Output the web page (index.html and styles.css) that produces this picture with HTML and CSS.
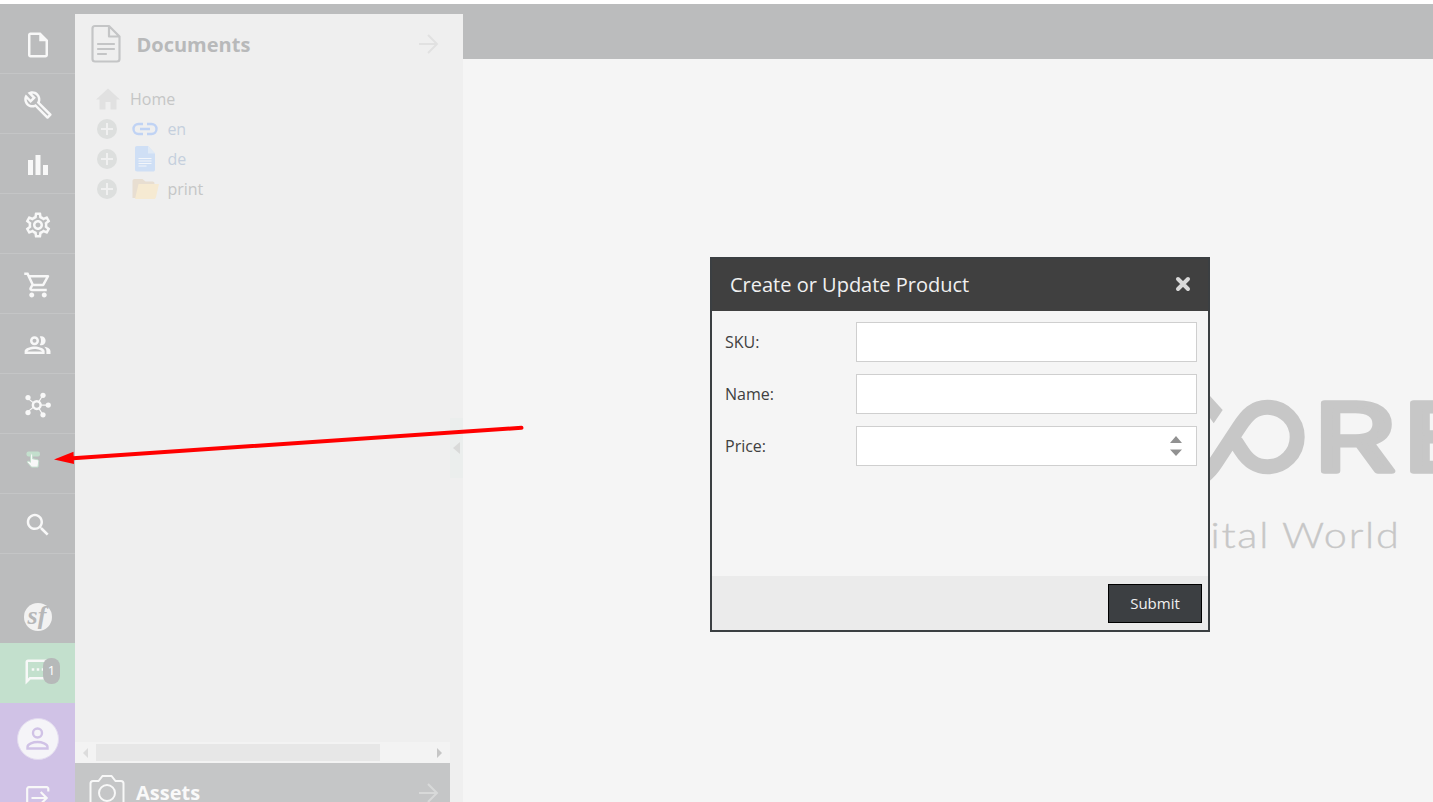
FILE: index.html
```html
<!DOCTYPE html>
<html lang="en">
<head>
<meta charset="utf-8">
<title>Create or Update Product</title>
<link rel="stylesheet" href="styles.css">
</head>
<body>
<div class="app">
  <nav class="sidebar">
    <div class="nav-item"><svg class="icon" viewBox="0 0 24 24"><path d="M14 2H6c-1.100 0-2 .9-2 2v16c0 1.100.9 2 2 2h12c1.100 0 2-.9 2-2V8l-6-6zM6 20V4h7v5h5v11H6z"/></svg></div>
    <div class="nav-item"><svg class="icon" viewBox="0 0 24 24"><path d="M22.610 18.990l-9.080-9.080c.93-2.340.45-5.100-1.440-7C9.790.61 6.210.4 3.660 2.260L7.500 6.110 6.080 7.520 2.250 3.690C.39 6.230.6 9.820 2.900 12.110c1.860 1.860 4.570 2.350 6.890 1.480l9.110 9.110c.39.39 1.020.39 1.410 0l2.300-2.300c.4-.38.4-1.010 0-1.410zm-3 1.600l-9.460-9.460c-.61.45-1.290.72-2 .82-1.360.2-2.790-.21-3.830-1.250C3.370 9.760 2.930 8.500 3 7.260l3.090 3.090 4.240-4.240-3.090-3.090c1.240-.07 2.490.37 3.440 1.310 1.080 1.080 1.490 2.570 1.240 3.960-.12.71-.42 1.370-.88 1.960l9.450 9.450-.88.89z"/></svg></div>
    <div class="nav-item"><svg class="icon" viewBox="0 0 24 24"><path d="M4 8h4v12H4zM10 4h4v16h-4zM16 12h4v8h-4z"/></svg></div>
    <div class="nav-item"><svg class="icon" viewBox="0 0 24 24"><path d="M19.430 12.980c.04-.32.07-.64.07-.98s-.03-.66-.07-.98l2.110-1.650c.19-.15.24-.42.12-.64l-2-3.460c-.12-.22-.39-.3-.61-.22l-2.490 1c-.52-.4-1.080-.73-1.690-.98l-.38-2.650C14.460 2.180 14.250 2 14 2h-4c-.25 0-.46.18-.49.42l-.38 2.650c-.61.25-1.170.59-1.690.98l-2.490-1c-.23-.09-.49 0-.61.22l-2 3.460c-.13.22-.07.49.12.64l2.110 1.650c-.04.32-.07.65-.07.98s.03.66.07.98l-2.110 1.650c-.19.15-.24.42-.12.64l2 3.460c.12.22.39.3.61.22l2.490-1c.52.4 1.080.73 1.690.98l.38 2.650c.03.24.24.42.49.42h4c.25 0 .46-.18.49-.42l.38-2.650c.61-.25 1.170-.59 1.690-.98l2.490 1c.23.09.49 0 .61-.22l2-3.460c.12-.22.07-.49-.12-.64l-2.110-1.650zm-1.980-1.710c.04.31.05.52.05.73s-.02.43-.05.73l-.14 1.130.89.7 1.080.84-.7 1.210-1.270-.51-1.040-.42-.9.68c-.43.32-.84.56-1.250.73l-1.060.43-.16 1.130-.2 1.350h-1.400l-.35-2.480-1.060-.43c-.43-.18-.83-.41-1.230-.71l-.91-.7-1.060.43-1.270.51-.7-1.210 1.080-.84.89-.7-.14-1.130c-.03-.31-.05-.54-.05-.74s.02-.43.05-.73l.14-1.130-.89-.7-1.080-.84.7-1.210 1.270.51 1.040.42.9-.68c.43-.32.84-.56 1.250-.73l1.060-.43.35-2.480h1.390l.35 2.480 1.060.43c.43.18.83.41 1.230.71l.91.7 1.060-.43 1.270-.51.7 1.210-1.070.85-.89.7.14 1.130zM12 8c-2.210 0-4 1.790-4 4s1.790 4 4 4 4-1.790 4-4-1.790-4-4-4zm0 6c-1.100 0-2-.9-2-2s.9-2 2-2 2 .9 2 2-.9 2-2 2z"/></svg></div>
    <div class="nav-item"><svg class="icon" viewBox="0 0 24 24"><path d="M15.550 13c.75 0 1.410-.41 1.750-1.030l3.580-6.490c.37-.66-.11-1.480-.87-1.480H5.210l-.94-2H1v2h2l3.600 7.590-1.350 2.440C4.520 15.370 5.480 17 7 17h12v-2H7l1.100-2h7.450zM6.160 6h12.150l-2.760 5H8.530L6.160 6zM7 18c-1.100 0-1.990.9-1.990 2S5.900 22 7 22s2-.9 2-2-.9-2-2-2zm10 0c-1.100 0-1.990.9-1.990 2s.89 2 1.990 2 2-.9 2-2-.9-2-2-2z"/></svg></div>
    <div class="nav-item"><svg class="icon" viewBox="0 0 24 24"><circle class="line" cx="9.200" cy="8.600" r="2.600"/><path d="M13.400 5.200c2.500-.8 4.700.8 4.700 3.400s-2.200 4.200-4.700 3.400c1.400-2.100 1.400-4.700 0-6.800zM9.300 13.200c-2.800 0-8 1.200-8 3.800v2.200h16V17c0-2.600-5.300-3.800-8-3.800zm5.900 3.900H3.500c.7-.9 3.400-1.900 5.800-1.900s5.200 1 5.900 1.900zM17 13.400c2.700.4 5 1.700 5 3.600v2.200h-3.300V17c0-1.600-.7-2.700-1.700-3.600z"/></svg></div>
    <div class="nav-item"><svg class="icon" viewBox="0 0 24 24"><circle class="line" cx="11" cy="12" r="3.100"/><path class="thin" d="M12.800 9.200l3-5M12.800 14.800l3 5M14.500 12h6M8.400 10.300l-5-4M8.400 13.700l-5 4"/><circle cx="16" cy="4.200" r="2.100"/><circle cx="16" cy="19.800" r="2.100"/><circle cx="20.200" cy="12" r="2.100"/><circle cx="4" cy="6" r="2.100"/><circle cx="4" cy="18" r="2.100"/></svg></div>
    <div class="nav-item nav-custom"><svg class="hand" viewBox="0 0 15 18"><rect class="mint" x="0.500" y="0.500" width="13.500" height="5" rx="2"/><path class="finger" d="M4.500 3c1.600-.5 2 .3 2 1.300v3.500l5 .9c1 .2 1.300 1 1.200 1.900l-.7 5.500H5.500L1 11c.6-1.200 2-1 3.500.3z"/></svg></div>
    <div class="nav-item"><svg class="icon" viewBox="0 0 24 24"><path d="M15.500 14h-.79l-.28-.27C15.410 12.590 16 11.110 16 9.500 16 5.910 13.090 3 9.500 3S3 5.910 3 9.500 5.910 16 9.500 16c1.610 0 3.090-.59 4.230-1.570l.27.28v.79l5 4.990L20.490 19l-4.990-5zm-6 0C7.010 14 5 11.990 5 9.500S7.010 5 9.500 5 14 7.010 14 9.500 11.990 14 9.500 14z"/></svg></div>
    <div class="symfony"><span>sf</span></div>
    <div class="messages"><svg class="icon" viewBox="0 0 24 24"><path d="M20 2H4c-1.100 0-2 .9-2 2v18l4-4h14c1.100 0 2-.9 2-2V4c0-1.100-.9-2-2-2zm0 14H5.200L4 17.200V4h16v12zM7 9h2v2H7zm4 0h2v2h-2zm4 0h2v2h-2z"/></svg><span class="badge">1</span></div>
    <div class="account">
      <div class="avatar"><svg viewBox="0 0 40 40"><circle cx="19.500" cy="14" r="4.500"/><path d="M9.500 29.500V28c0-3.200 5.800-5 10-5s10 1.800 10 5v1.500z"/></svg></div>
      <svg class="logout" viewBox="0 0 24 24"><path d="M21.500 6V3.500c0-.8-.6-1.500-1.500-1.500H3.500C2.700 2 2 2.700 2 3.500V22M6 12h14M14.500 6.500L20 12l-5.500 5.500"/></svg>
    </div>
  </nav>

  <aside class="panel">
    <div class="panel-body">
      <header class="panel-head">
        <svg class="doc-icon" viewBox="0 0 32 40"><path d="M5 2h14l10.500 10.500V35c0 1.700-.8 2.500-2.500 2.500H5c-1.700 0-2.500-.8-2.500-2.500V4.500C2.500 2.800 3.300 2 5 2zM19 2v10.500h10.500M8 20h16M8 25h16M8 30h8"/></svg>
        <h2>Documents</h2>
        <svg class="arrow" viewBox="0 0 22 22"><path d="M1 11h18M10 2l9 9-9 9"/></svg>
      </header>
      <ul class="tree">
        <li class="root"><svg class="home" viewBox="0 0 24 22"><path d="M12 .5L24 11.500h-3.500V21.500h-6v-7.500h-5v7.500h-6V11.500H0z"/></svg><span>Home</span></li>
        <li><i class="plus"></i><svg class="node" viewBox="0 0 28 28"><path class="chain" d="M12 9H7.500a5 5 0 0 0 0 10H12M16 9h4.500a5 5 0 0 1 0 10H16M9 14h10"/></svg><span class="linked">en</span></li>
        <li><i class="plus"></i><svg class="node" viewBox="0 0 28 28"><path fill="#cfdff5" d="M5.500 1H17l7 7.500v16c0 1.500-.7 2-2 2H6c-1.300 0-2-.7-2-2V3c0-1.300.7-2 2-2z"/><path fill="#e0eaf6" d="M17 1l7 7.500h-7z"/><path class="rules" d="M7.500 13.500h13M7.500 16h13M7.500 18.500h13M7.500 21h8"/></svg><span class="linked">de</span></li>
        <li><i class="plus"></i><svg class="node" viewBox="0 0 28 28"><path fill="#e8ded1" d="M1.500 6c0-1 .7-2 2-2h8l3 2.500h7c1.300 0 2 .7 2 2V23h-22z"/><path fill="#f6ead2" d="M7.500 9H28l-3 13c-.3 1.500-1 2-2 2H4z"/></svg><span>print</span></li>
      </ul>
      <div class="scrollbar"><i class="prev"></i><i class="thumb"></i><i class="next"></i></div>
      <header class="assets">
        <svg class="camera" viewBox="0 0 36 36"><path d="M1.500 34V8.500c0-1.500.7-2.500 2.500-2.500h5.500l4-5h9l4 5H32c1.800 0 2.500 1 2.500 2.500V34"/><circle cx="18" cy="18" r="8"/></svg>
        <h2>Assets</h2>
        <svg class="arrow" viewBox="0 0 22 22"><path d="M1 11h18M10 2l9 9-9 9"/></svg>
      </header>
    </div>
    <div class="splitter"><i></i></div>
  </aside>

  <main class="workspace">
    <div class="topbar"></div>
    <div class="canvas">
      <svg class="logo" viewBox="1208 390 225 170">
        <path d="M1210 396l12.700 14-9 13.300-5.700-8z"/>
        <path class="loop" d="M1203 476.500c6-4 10-9.500 13.500-15l22-33.500c9-14 16-20.700 29-20.700a29.700 29.700 0 0 1 0 59.400c-13 0-20-6.700-26-16l-6-9"/>
        <text class="mark" x="1313.500" y="470.500" textLength="82" lengthAdjust="spacingAndGlyphs">R</text>
        <text class="mark" x="1402.500" y="470.500" textLength="78" lengthAdjust="spacingAndGlyphs">E</text>
        <text class="tagline" x="1210.500" y="548" textLength="190" lengthAdjust="spacingAndGlyphs">ital World</text>
      </svg>
    </div>
  </main>
</div>

<section class="modal">
  <header class="modal-head"><h1>Create or Update Product</h1><svg class="close" viewBox="0 0 16 16"><path d="M3 3l10 10M13 3L3 13"/></svg></header>
  <form class="form">
    <label class="field"><span>SKU:</span><input type="text"></label>
    <label class="field"><span>Name:</span><input type="text"></label>
    <label class="field"><span>Price:</span><span class="spin"><input type="text"><svg viewBox="0 0 12 22"><path d="M0 8l6-7 6 7zM0 14.500h12l-6 6.500z"/></svg></span></label>
  </form>
  <footer class="modal-foot"><button type="button">Submit</button></footer>
</section>

<svg class="pointer" viewBox="0 0 480 50"><path class="shaft" d="M23 38.300L471.500 7.800"/><path class="head" d="M4 39.500l19.500-7.700.5 12.300z"/></svg>
</body>
</html>
```
FILE: styles.css
```css
* { box-sizing: border-box; }
body { margin: 0; padding-top: 4px; height: 802px; overflow: hidden; background: #fff; font-family: "Open Sans", "Noto Sans", sans-serif; font-size: 16px; }
h1, h2, ul { margin: 0; padding: 0; }
svg { display: block; flex: none; }
.app { display: flex; height: 798px; background: #bbbcbd; }

.sidebar { width: 75px; flex: none; padding-top: 10px; display: flex; flex-direction: column; overflow: hidden; }
.nav-item { height: 60px; flex: none; padding: 16px 0 0 23px; border-bottom: 1px solid #c4c5c6; }
.icon { width: 30px; height: 30px; fill: #f8f8f8; }
.icon .line { fill: none; stroke: #f8f8f8; stroke-width: 2; }
.icon .thin { fill: none; stroke: #f8f8f8; stroke-width: 1; }
.nav-custom { padding: 17px 0 0 26px; }
.hand { width: 15px; height: 18px; }
.mint { fill: #c3dfcd; }
.finger { fill: #f8f8f8; stroke: #c3dfcd; stroke-width: 1; }
.symfony { height: 89px; flex: none; display: flex; padding: 49px 0 0 24px; }
.symfony span { width: 28px; height: 28px; border-radius: 50%; background: #f2f2f2; color: #b6b7b8; font: italic bold 26px/25px "Liberation Serif", serif; text-align: center; padding-right: 2px; }
.messages { position: relative; height: 60px; flex: none; background: #c3e0cd; padding: 14px 0 0 23px; }
.badge { position: absolute; left: 43px; top: 15px; width: 17px; height: 26px; border-radius: 8px; background: #b6b9b9; color: #fff; font-size: 13px; line-height: 25px; text-align: center; }
.account { flex: 1 0 99px; background: #d0c2e6; padding: 15px 0 0 17px; }
.avatar { width: 42px; height: 42px; border-radius: 50%; background: #f5f4f8; border: 1px solid #e3dbf0; }
.avatar svg { width: 40px; height: 40px; fill: none; stroke: #d0c2e6; stroke-width: 2.400; }
.logout { width: 26px; height: 26px; margin: 25px 0 0 8px; fill: none; stroke: #f8f8f8; stroke-width: 2; }

.panel { width: 388px; flex: none; margin-top: 10px; display: flex; background: #efefef; }
.panel-body { width: 375px; display: flex; flex-direction: column; }
.panel-head { height: 70px; display: flex; padding-left: 15px; }
h2 { flex: 1; font-size: 20px; font-weight: 700; color: #b8b9ba; }
.doc-icon { width: 32px; height: 40px; margin: 10px 0 0; fill: none; stroke: #c4c5c6; stroke-width: 2.200; stroke-linecap: round; stroke-linejoin: round; }
.panel-head h2 { line-height: 62px; padding-left: 14.500px; }
.arrow { width: 22px; height: 22px; margin: 19px 10px 0 0; fill: none; stroke: #e1e1e1; stroke-width: 2; }
.tree { list-style: none; flex: 1; color: #c5c6c6; }
.tree li { height: 30px; display: flex; align-items: center; padding-left: 22.400px; }
.tree .root { padding-left: 22px; }
.tree .root span { padding-left: 10px; }
.home { width: 24px; height: 22px; margin-left: -1px; fill: #e1e1e1; }
.plus { width: 20px; height: 20px; border-radius: 50%; background: linear-gradient(#f0f0f0, #f0f0f0) 50% 50% / 12px 2px no-repeat, linear-gradient(#f0f0f0, #f0f0f0) 50% 50% / 2px 12px no-repeat, #dddfde; }
.node { width: 28px; height: 28px; margin: 0 8.400px 0 13.600px; }
.chain { fill: none; stroke: #c0d3f4; stroke-width: 2.400; }
.rules { stroke: #f3f6fa; stroke-width: 1.200; }
.linked { color: #c5cfdd; }
.scrollbar { height: 21px; display: flex; align-items: center; background: #f3f3f3; padding: 0 8px; }
.scrollbar i { flex: none; }
.prev, .next { border: 5px solid transparent; }
.prev { border-left: 0; border-right-color: #dcdcdc; margin-right: 8px; }
.thumb { width: 284px; height: 17px; background: #e7e7e7; }
.next { border-right: 0; border-left-color: #c6c6c6; margin-left: auto; }
.assets { height: 39px; flex: none; display: flex; background: #c5c6c7; padding-left: 14px; }
.assets h2 { color: #f9f9f9; line-height: 60px; padding-left: 11px; }
.assets .arrow { stroke: #d8d9d9; }
.camera { width: 36px; height: 36px; margin-top: 12px; fill: none; stroke: #f8f8f8; stroke-width: 2; }
.splitter { width: 13px; padding-top: 404px; }
.splitter i { display: flex; width: 13px; height: 60px; align-items: center; background: #ebeeed; padding-left: 3px; }
.splitter i::before { content: ""; border: 6px solid transparent; border-left: 0; border-right: 7px solid #d9dad9; }

.workspace { flex: 1; display: flex; flex-direction: column; }
.topbar { height: 55px; }
.canvas { flex: 1; background: #f5f5f5; display: flex; justify-content: flex-end; padding-top: 331px; }
.logo { width: 225px; height: 170px; fill: #c7c7c7; }
.loop { fill: none; stroke: #c7c7c7; stroke-width: 15; }
.mark { font: 400 93px Inter, sans-serif; stroke: #c7c7c7; stroke-width: 5.500; stroke-linejoin: round; }
.tagline { font: 300 36px Lato, sans-serif; letter-spacing: 1.500px; stroke: #c7c7c7; stroke-width: 0.400; }

.modal { position: absolute; left: 710px; top: 257px; width: 500px; height: 375px; border: 2px solid #3b3f42; background: #f5f5f5; display: flex; flex-direction: column; }
.modal-head { height: 52px; display: flex; align-items: center; justify-content: space-between; background: #404040; padding: 0 17px 2px 18px; }
h1 { font-size: 20px; font-weight: 400; color: #f0f0f0; }
.close { width: 16px; height: 16px; overflow: visible; stroke: #d9d9d9; stroke-width: 4; stroke-linecap: round; }
.form { flex: 1; display: flex; flex-direction: column; gap: 12px; padding: 11px 11px 0 13px; color: #404040; }
.field { display: flex; align-items: center; justify-content: space-between; height: 40px; }
input { width: 341px; height: 40px; border: 1px solid #cfcfcf; background: #fff; padding: 0 8px; font: inherit; }
.spin { position: relative; }
.spin input { display: block; }
.spin svg { position: absolute; right: 15px; top: 9px; width: 12px; height: 22px; fill: #919191; }
.modal-foot { height: 54px; display: flex; justify-content: flex-end; background: #ebebeb; padding: 8px 6px 0 0; }
button { width: 94px; height: 39px; border: 1px solid #000; background: #3c3f42; color: #f0f0f0; font: 15px "Open Sans", sans-serif; padding: 0 0 2px; }

.pointer { position: absolute; left: 50px; top: 420px; width: 480px; height: 50px; }
.shaft { stroke: #f00; stroke-width: 4; stroke-linecap: round; }
.head { fill: #f00; }
```
